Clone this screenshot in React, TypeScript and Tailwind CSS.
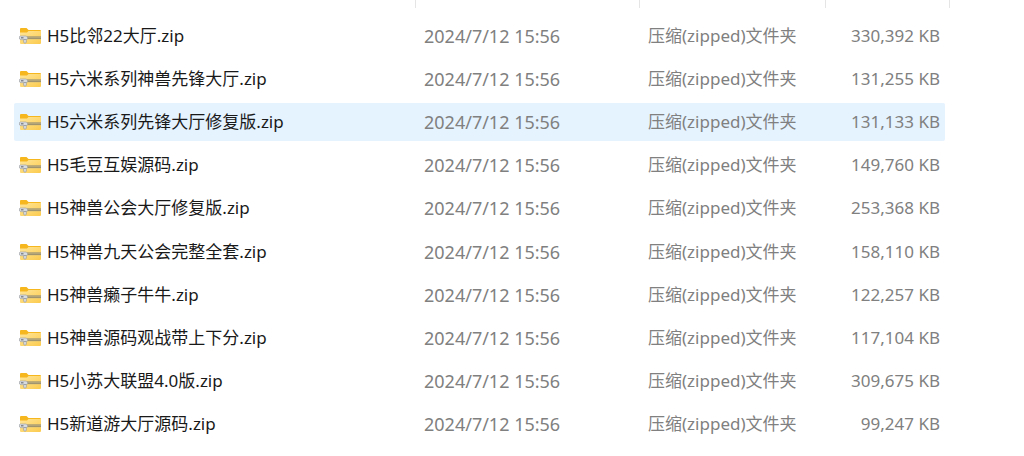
type ZipFile = { name: string; modified: string; size: string; active?: boolean };

const FILES: ZipFile[] = [
  { name: 'H5比邻22大厅.zip', modified: '2024/7/12 15:56', size: '330,392 KB' },
  { name: 'H5六米系列神兽先锋大厅.zip', modified: '2024/7/12 15:56', size: '131,255 KB' },
  { name: 'H5六米系列先锋大厅修复版.zip', modified: '2024/7/12 15:56', size: '131,133 KB', active: true },
  { name: 'H5毛豆互娱源码.zip', modified: '2024/7/12 15:56', size: '149,760 KB' },
  { name: 'H5神兽公会大厅修复版.zip', modified: '2024/7/12 15:56', size: '253,368 KB' },
  { name: 'H5神兽九天公会完整全套.zip', modified: '2024/7/12 15:56', size: '158,110 KB' },
  { name: 'H5神兽癞子牛牛.zip', modified: '2024/7/12 15:56', size: '122,257 KB' },
  { name: 'H5神兽源码观战带上下分.zip', modified: '2024/7/12 15:56', size: '117,104 KB' },
  { name: 'H5小苏大联盟4.0版.zip', modified: '2024/7/12 15:56', size: '309,675 KB' },
  { name: 'H5新道游大厅源码.zip', modified: '2024/7/12 15:56', size: '99,247 KB' },
];

function ZipIcon() {
  return (
    <svg width="22" height="18" viewBox="0 0 22 18" className="shrink-0" aria-hidden="true">
      <defs>
        <linearGradient id="folder" x1="0" y1="0" x2="1" y2="1">
          <stop offset="0" stopColor="#ffe699" />
          <stop offset="1" stopColor="#fccb4e" />
        </linearGradient>
      </defs>
      <path d="M1 2Q1 1 2 1H7.5L9.500 3H21Q22 3 22 4V8H1Z" fill="#f6b61e" />
      <path d="M1 5.500H8L9.500 4H22V16Q22 17 21 17H2Q1 17 1 16Z" fill="url(#folder)" />
      <path d="M8 9.300H22V12.300H8Z" fill="#c9b880" />
      <path d="M8.500 10H22M9.500 11.500H22" stroke="#77715f" strokeDasharray="1 1" />
      <path d="M1 9H7L8.500 10V12L7 12.700H2L0.500 12V9.500Z" fill="#d9dcdf" stroke="#989ca1" strokeWidth="0.600" />
      <path d="M2 10.800H4.500" stroke="#70757b" strokeWidth="1.200" />
      <path d="M4.800 12.500H7.200V15.500Q6 17 4.800 15.500Z" fill="#e6e8ea" stroke="#8d9298" strokeWidth="0.700" />
    </svg>
  );
}

export default function App() {
  return (
    <main className="min-h-screen bg-white pr-[74px] pb-2 pl-[14px] font-['Noto_Sans','Noto_Sans_CJK_SC',sans-serif] text-[17px] leading-6 text-[#808080]">
      <table className="h-[446px] w-full table-fixed border-collapse whitespace-nowrap">
        <colgroup>
          <col />
          <col className="w-[224px]" />
          <col className="w-[186px]" />
          <col className="w-[119px]" />
          <col className="w-[5px]" />
        </colgroup>
        <thead>
          <tr className="h-[14px] align-top">
            <th className="p-0"><div className="h-2 border-r border-[#e5e5e5]" /></th>
            <th className="p-0"><div className="h-2 border-r border-[#e5e5e5]" /></th>
            <th className="p-0"><div className="h-2 border-r border-[#e5e5e5]" /></th>
            <th className="p-0" colSpan={2}><div className="h-2 border-r border-[#e5e5e5]" /></th>
          </tr>
        </thead>
        <tbody>
          {FILES.map((file) => {
            const bg = file.active ? 'bg-[#e5f3ff]' : '';
            return (
              <tr key={file.name}>
                <td className="p-0">
                  <div className={`flex h-[38px] items-center gap-[6px] rounded-l-xs pl-[5px] text-[#191919] ${bg}`}>
                    <ZipIcon />
                    <span>{file.name}</span>
                  </div>
                </td>
                <td className="p-0">
                  <div className={`flex h-[38px] items-center pl-2 text-[18px] ${bg}`}>{file.modified}</div>
                </td>
                <td className="p-0">
                  <div className={`flex h-[38px] items-center pl-2 ${bg}`}>压缩(zipped)文件夹</div>
                </td>
                <td className="p-0">
                  <div className={`flex h-[38px] items-center justify-end rounded-r-xs pr-[5px] ${bg}`}>{file.size}</div>
                </td>
                <td className="p-0" />
              </tr>
            );
          })}
        </tbody>
      </table>
    </main>
  );
}
